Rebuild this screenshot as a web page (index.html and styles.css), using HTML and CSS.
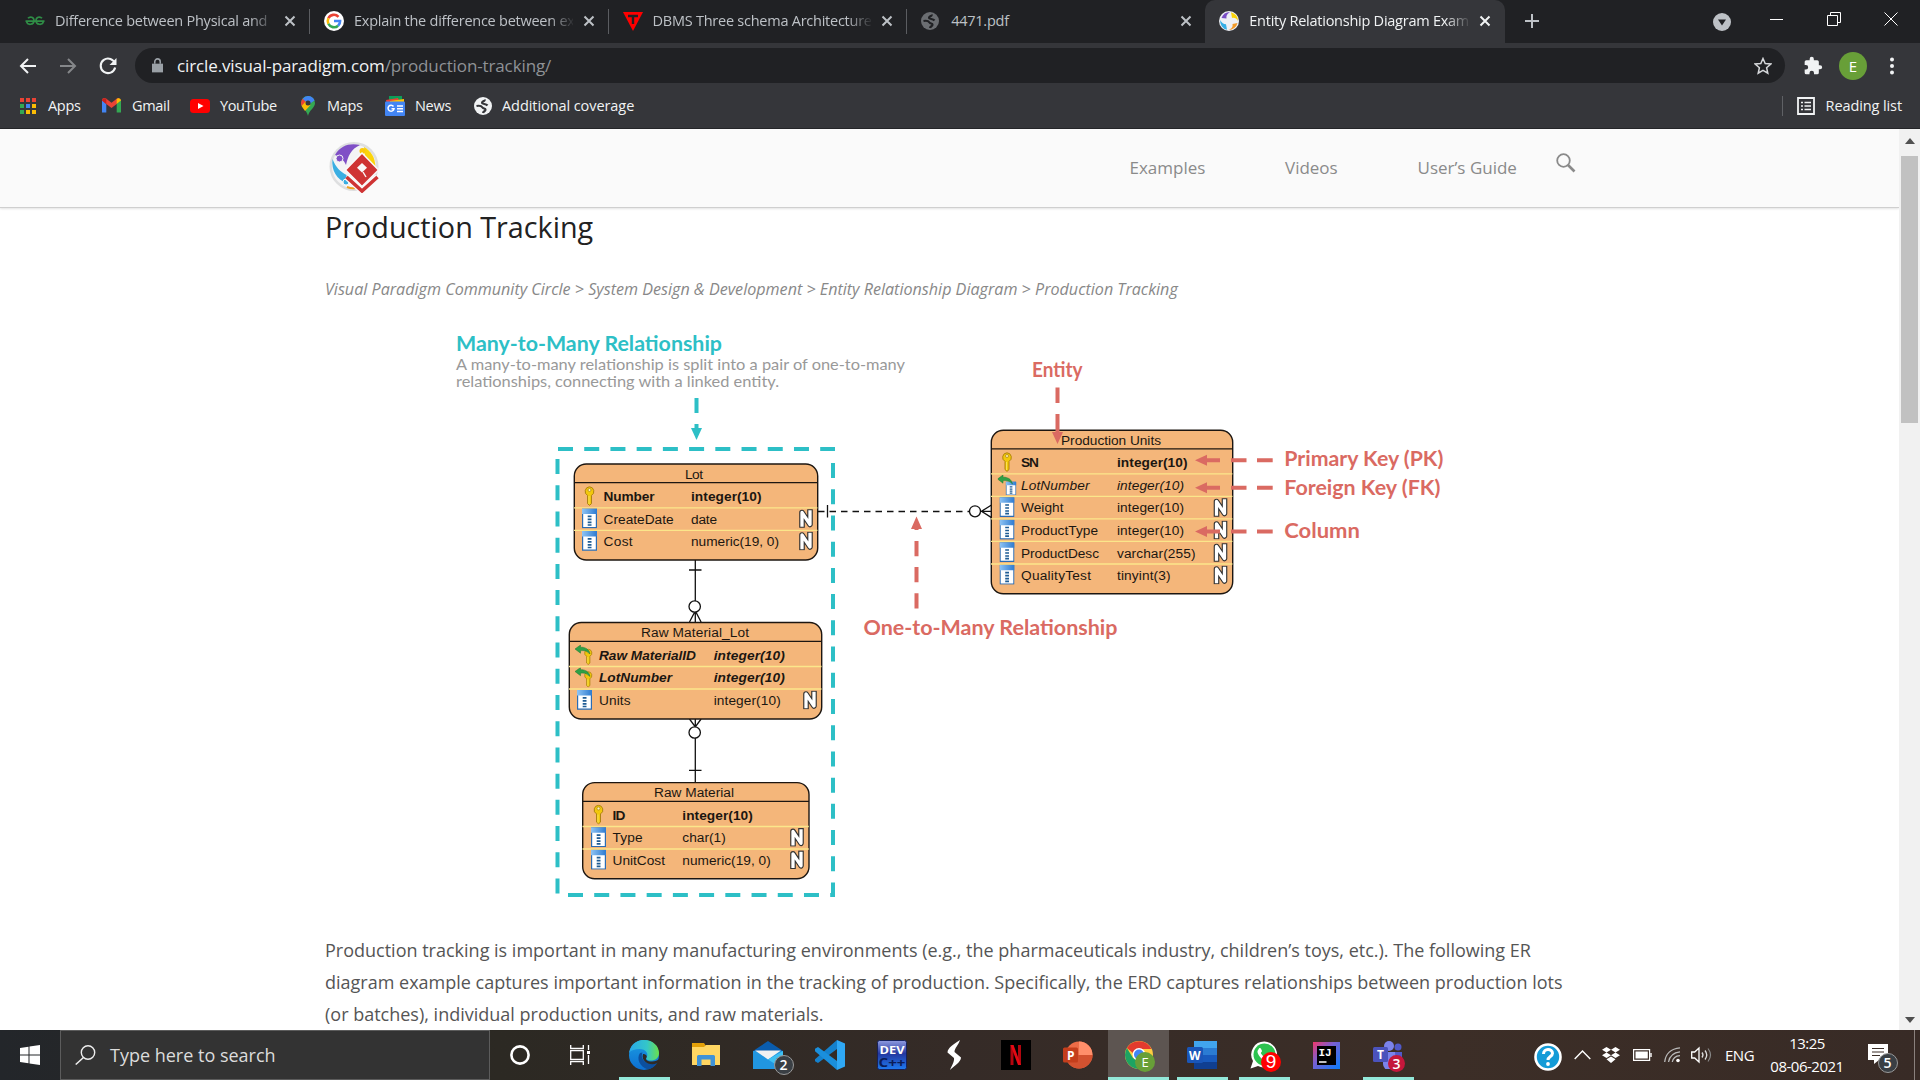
FILE: index.html
```html
<!DOCTYPE html>
<html lang="en">
<head>
<meta charset="utf-8">
<title>Entity Relationship Diagram Example</title>
<link rel="stylesheet" href="styles.css">
</head>
<body>
<svg class="defs" width="0" height="0" aria-hidden="true">
  <defs>
    <linearGradient id="colTop" x1="0" y1="0" x2="1" y2="0"><stop offset="0" stop-color="#8fc4f4"/><stop offset="1" stop-color="#2d7ad0"/></linearGradient>
    <linearGradient id="devBg" x1="0" y1="0" x2="0" y2="1"><stop offset="0" stop-color="#8f9be0"/><stop offset=".45" stop-color="#2438a0"/><stop offset="1" stop-color="#1e7af0"/></linearGradient>
    <linearGradient id="edgeA" x1="0" y1="0" x2="1" y2="0"><stop offset="0" stop-color="#28a8ea"/><stop offset=".6" stop-color="#34c6c9"/><stop offset="1" stop-color="#6be04a"/></linearGradient>
    <linearGradient id="edgeB" x1="0" y1="0" x2="0" y2="1"><stop offset="0" stop-color="#1b9de2"/><stop offset="1" stop-color="#0d6fd1"/></linearGradient>
    <linearGradient id="ijBg" x1="0" y1="0" x2="1" y2="1"><stop offset="0" stop-color="#f0386b"/><stop offset=".4" stop-color="#7a5fd0"/><stop offset="1" stop-color="#087cfa"/></linearGradient>
    <symbol id="key" viewBox="0 0 15 20"><path d="M7.5.8a4.6 4.6 0 0 0-2 8.6v8.2l2 1.8 2-1.8V9.4a4.6 4.6 0 0 0-2-8.6z" fill="#f2c80c" stroke="#a67c0c" stroke-width=".9"/><circle cx="7.5" cy="4" r="1.5" fill="#fff5c0" stroke="#a67c0c" stroke-width=".7"/><path d="M7 10v8" stroke="#fbe66a" stroke-width=".8"/></symbol>
    <symbol id="col" viewBox="0 0 15 20"><path d="M.6.6h13.800v18.600H.6z" fill="#fff" stroke="#2a6cb4" stroke-width="1.200"/><path d="M0 0h15v5.500H0z" fill="url(#colTop)"/><path d="M5.700 7.800h3.800M5.700 10.800h3.800M5.700 13.800h3.800M5.700 16.500h3.800" stroke="#1f5c94" stroke-width="1.700"/></symbol>
    <symbol id="arr" viewBox="0 0 16 10"><path d="M0 4 5.500 0v2.200C10 2 14 4 15 9c-3-3.200-6-3.800-9.500-3.200V8.200z" fill="#2fa046" stroke="#187a30" stroke-width=".5"/></symbol>
    <symbol id="fkey" viewBox="0 0 20 20"><use href="#key" x="7" y="3.500" width="12.500" height="16.500"/><use href="#arr" x="0" y="0" width="16" height="10"/></symbol>
    <symbol id="fcol" viewBox="0 0 20 20"><use href="#col" x="8" y="6.500" width="11" height="14"/><use href="#arr" x="0" y="0" width="16" height="10"/></symbol>
    <symbol id="nul" viewBox="0 0 15 19"><path d="M3.500 16V3.500L11.500 15.500V3" fill="none" stroke="#333" stroke-width="5.600" stroke-linejoin="round" stroke-linecap="square"/><path d="M3.500 16V3.500L11.500 15.500V3" fill="none" stroke="#fff" stroke-width="3.300" stroke-linejoin="round" stroke-linecap="square"/></symbol>
    <symbol id="x" viewBox="0 0 12 12"><path d="m1.500 1.500 9 9m0-9-9 9" stroke="currentColor" stroke-width="2" fill="none"/></symbol>
    <symbol id="globe" viewBox="0 0 18 18"><circle cx="9" cy="9" r="9" fill="currentColor"/><path d="M10.500 2.500c1 1.500-3 2-2.500 3.500s4 .5 5.500 2.500" fill="none" stroke="var(--hole)" stroke-width="2.200"/><path d="M2.500 9c2.500-.5 5 0 6 1.500s3 .5 3 2.200-2 1.300-2.500 3.300" fill="none" stroke="var(--hole)" stroke-width="2.200"/></symbol>
    <symbol id="swirl" viewBox="0 0 20 20"><circle cx="10" cy="10" r="10" fill="#eef0f4"/><path d="M2.500 7A9 9 0 0 1 11 1c-3 2-4 4-3.500 6.500z" fill="#7a4fc4"/><path d="M12 1.200A9 9 0 0 1 19 10c-1.500-2.600-3.500-3.600-6-3z" fill="#fbd40a"/><path d="M18.500 12a9 9 0 0 1-9 7c3.500-1.400 4.500-3.200 4-6z" fill="#f19a28"/><path d="M8 18.800A9 9 0 0 1 1.200 9C3 12 4.500 13 7 13.200z" fill="#35aee6"/></symbol>
  </defs>
</svg>

<header class="browser">
  <div class="tabs">
    <div class="tab"><svg class="fav" viewBox="0 0 20 20"><path d="M.5 10.200h19M3 7.300C5 5 9 6 9 9.500c0 4.500-6.500 5.200-7.500.9M17 7.300C15 5 11 6 11 9.500c0 4.500 6.500 5.200 7.500.9" fill="none" stroke="#2f8d46" stroke-width="1.700"/></svg><span class="name fade">Difference between Physical and</span><svg class="x"><use href="#x"/></svg></div>
    <div class="tab"><svg class="fav" viewBox="0 0 20 20"><circle cx="10" cy="10" r="10" fill="#fff"/><g fill="none" stroke-width="2.600"><path d="M14.500 5.800A6.200 6.200 0 0 0 4.400 7.300" stroke="#ea4335"/><path d="M4.400 7.300a6.200 6.200 0 0 0 0 5.400" stroke="#fbbc05"/><path d="M4.400 12.700a6.200 6.200 0 0 0 9.700 2" stroke="#34a853"/><path d="M14.100 14.700A6.200 6.200 0 0 0 16.100 10H10" stroke="#4285f4"/></g></svg><span class="name fade">Explain the difference between ex</span><svg class="x"><use href="#x"/></svg></div>
    <div class="tab"><svg class="fav" viewBox="0 0 20 20"><path d="M0 1h20L10 20z" fill="#f00"/><path d="M5 5h10M10 5v8" stroke="#202124" stroke-width="2.400"/></svg><span class="name fade">DBMS Three schema Architecture</span><svg class="x"><use href="#x"/></svg></div>
    <div class="tab"><svg class="fav dim" viewBox="0 0 20 20"><use href="#globe" width="18" height="18" y="1"/></svg><span class="name">4471.pdf</span><svg class="x"><use href="#x"/></svg></div>
    <div class="tab active"><svg class="fav" viewBox="0 0 20 20"><use href="#swirl"/></svg><span class="name fade">Entity Relationship Diagram Exam</span><svg class="x"><use href="#x"/></svg></div>
    <svg class="newtab" viewBox="0 0 16 16"><path d="M8 1v14M1 8h14" stroke="#bdc1c6" stroke-width="2"/></svg>
    <div class="wincontrols">
      <svg width="18" height="18" viewBox="0 0 18 18"><circle cx="9" cy="9" r="9" fill="#bdc1c6"/><path d="M5 6.500h8L9 12.500z" fill="#202124"/></svg>
      <svg width="14" height="14" viewBox="0 0 14 14"><path d="M0 7.500h13" stroke="#fff"/></svg>
      <svg width="14" height="14" viewBox="0 0 14 14"><path d="M.5 3.500h10v10H.5zM3.500 3V.5h10v10H11" fill="none" stroke="#fff"/></svg>
      <svg width="14" height="14" viewBox="0 0 14 14"><path d="m.5.500 13 13m0-13-13 13" stroke="#fff"/></svg>
    </div>
  </div>

  <div class="toolbar">
    <svg class="nav-ico back" viewBox="0 0 18 18"><path d="M17 9H2.500M9 2 2 9l7 7" fill="none" stroke="#f1f3f4" stroke-width="2"/></svg>
    <svg class="nav-ico fwd" viewBox="0 0 18 18"><path d="M1 9h14.500M9 2l7 7-7 7" fill="none" stroke="#85878a" stroke-width="2"/></svg>
    <svg class="nav-ico" viewBox="0 0 18 18"><path d="M15.500 5.500A7.300 7.300 0 1 0 16.300 9" fill="none" stroke="#f1f3f4" stroke-width="2.100" transform="rotate(12 9 9)"/><path d="M17.500 1v7h-7z" fill="#f1f3f4"/></svg>
    <div class="omnibox">
      <svg width="11" height="15" viewBox="0 0 12 16"><path d="M0 6h12v9.500H0z" fill="#9aa0a6"/><path d="M3 6V3.800a3 3 0 0 1 6 0V6" fill="none" stroke="#9aa0a6" stroke-width="1.700"/></svg>
      <span class="url"><b>circle.visual-paradigm.com</b>/production-tracking/</span>
      <svg class="star" viewBox="0 0 18 18"><path d="m9 1.500 2.200 5 5.600.5-4.200 3.700 1.200 5.500L9 13.300l-4.800 2.900 1.200-5.500L1.200 7l5.600-.5z" fill="none" stroke="#d5d7da" stroke-width="1.500"/></svg>
    </div>
    <svg class="puzzle" viewBox="0 0 24 24"><path d="M20.500 11H19V7a2 2 0 0 0-2-2h-4V3.500a2.500 2.500 0 0 0-5 0V5H4a2 2 0 0 0-2 2v3.800h1.500a2.700 2.700 0 0 1 0 5.400H2V20a2 2 0 0 0 2 2h3.800v-1.500a2.700 2.700 0 0 1 5.400 0V22H17a2 2 0 0 0 2-2v-4h1.500a2.500 2.500 0 0 0 0-5z" fill="#f1f3f4"/></svg>
    <span class="avatar">E</span>
    <svg class="dots" viewBox="0 0 4 18"><g fill="#f1f3f4"><circle cx="2" cy="2.500" r="2"/><circle cx="2" cy="9" r="2"/><circle cx="2" cy="15.500" r="2"/></g></svg>
  </div>

  <nav class="bookmarks">
    <span class="bm b-apps"><svg width="16" height="16" viewBox="0 0 16 16"><path d="M0 0h4v4H0zM6 0h4v4H6zM12 0h4v4h-4z" fill="#ea4335"/><path d="M0 6h4v4H0zM0 12h4v4H0z" fill="#34a853"/><path d="M6 6h4v4H6z" fill="#4285f4"/><path d="M12 6h4v4h-4zM6 12h4v4H6zM12 12h4v4h-4z" fill="#fbbc05"/></svg>Apps</span>
    <span class="bm b-gmail"><svg width="19" height="15" viewBox="0 0 19 15"><path d="M0 2v12.500h4.300V6z" fill="#4285f4"/><path d="M19 2v12.500h-4.300V6z" fill="#34a853"/><path d="M0 2.500C0 0 2.500-.5 4 .6l5.500 4.200L15 .6c1.500-1.100 2.500-.6 2.500-.6L14.700 6 9.500 10 4.300 6z" fill="#ea4335"/><path d="M14.700.8C17 -.6 19 .5 19 2.500L14.700 6z" fill="#fbbc05"/><path d="M0 2.500C0 .5 2.200-.6 4.300.8V6z" fill="#c5221f"/></svg>Gmail</span>
    <span class="bm b-yt"><svg width="20" height="14" viewBox="0 0 20 14"><rect width="20" height="14" rx="3.500" fill="#f00"/><path d="m8 4 5.500 3L8 10z" fill="#fff"/></svg>YouTube</span>
    <span class="bm b-maps"><svg width="14" height="20" viewBox="0 0 14 20"><path d="M7 0a7 7 0 0 1 7 7c0 5-6 7-7 13C6 14 0 12 0 7a7 7 0 0 1 7-7z" fill="#34a853"/><path d="M7 0a7 7 0 0 1 6.500 4.500L7 9 1.500 3A7 7 0 0 1 7 0z" fill="#4285f4"/><path d="M1.600 2.700 5 6 .6 10C-.5 7 0 4.500 1.600 2.700z" fill="#ea4335"/><path d="m.6 10 4-4.500L9.500 9 4 15z" fill="#fbbc05"/><circle cx="7" cy="7" r="2.500" fill="#35363a"/></svg>Maps</span>
    <span class="bm b-news"><svg width="20" height="20" viewBox="0 0 20 20"><path d="M4 0h13v8H4z" fill="#0c9d58"/><path d="M1 4l12-2 2 6H2z" fill="#ea4335"/><path d="M5 5l14-2v6H5z" fill="#ffc107"/><rect y="5.500" width="20" height="14.500" rx="1" fill="#4285f4"/><path d="M8.500 10.500A3 3 0 1 0 9 12.800H6.500M12 10h6M12 12.800h6M12 15.600h6" fill="none" stroke="#fff" stroke-width="1.500"/></svg>News</span>
    <span class="bm b-add"><svg class="lit" width="18" height="18"><use href="#globe"/></svg>Additional coverage</span>
    <span class="bm reading"><svg width="18" height="18" viewBox="0 0 18 18"><path d="M1 1h16v16H1z" fill="none" stroke="#f1f3f4" stroke-width="1.800"/><path d="M4 5.500h2M4 9h2M4 12.500h2M7.500 5.500H14M7.500 9H14M7.500 12.500H14" stroke="#f1f3f4" stroke-width="1.700"/></svg>Reading list</span>
  </nav>
</header>

<div class="viewport">
  <main class="page">
    <div class="site-head">
      <svg class="logo" viewBox="0 0 50 52"><circle cx="25" cy="25.500" r="24.500" fill="#dedfe0"/><circle cx="25" cy="25.500" r="22" fill="#f4f4f5"/><path d="M6 14C12 4 21 2 31 4 22 8 19 15 17 24 15 19 11 16 6 14z" fill="#7f4fc6"/><circle cx="10.500" cy="17.500" r="3.500" fill="#7f4fc6" stroke="#f4f4f5"/><path d="M35 6c7 4 11 10 11.500 20L36 16z" fill="#fbd40a"/><circle cx="33.500" cy="10" r="3" fill="#fbc80a"/><path d="M3.500 18c3 8 8 13 14 16v8C8 39 2 29 3.500 18z" fill="#3aaee2"/><circle cx="17" cy="41" r="3" fill="#3aaee2" stroke="#f4f4f5"/><path d="M18 46q5 2 8 1" stroke="#f0a020" stroke-width="2" fill="none"/><path d="m17.500 36 15.500 14 15.500-14" fill="none" stroke="#fafafa" stroke-width="6"/><path d="m17.500 36 15.500 14 15.500-14" fill="none" stroke="#cf3434" stroke-width="3.600"/><path d="M33 12 49.500 29 33 45.500 16.500 29z" fill="#cf3434" stroke="#fafafa" stroke-width="1.500"/><path d="m33 22 5 4.700-5 4.800-5-4.800z" fill="#fafafa"/><path d="m34 31 3 5" stroke="#fafafa" stroke-width="1.400"/></svg>
      <nav class="menu"><a class="m1">Examples</a><a class="m2">Videos</a><a class="m3">User’s Guide</a>
      <svg width="20" height="20" viewBox="0 0 20 20"><circle cx="7.500" cy="7.500" r="6.300" fill="none" stroke="#8a8a8a" stroke-width="1.800"/><path d="m12 12 6.500 6.500" stroke="#8a8a8a" stroke-width="2.600"/></svg></nav>
    </div>
    <article class="content">
      <h1>Production Tracking</h1>
      <p class="crumbs">Visual Paradigm Community Circle &gt; System Design &amp; Development &gt; Entity Relationship Diagram &gt; Production Tracking</p>
      <svg class="erd" viewBox="440 320 1020 590">
        <g class="geo teal" font-size="20.500">
          <text x="456" y="351" textLength="266" lengthAdjust="spacingAndGlyphs">Many-to-Many Relationship</text>
        </g>
        <g class="note">
          <text x="456" y="369.500" textLength="449" lengthAdjust="spacingAndGlyphs">A many-to-many relationship is split into a pair of one-to-many</text>
          <text x="456" y="387" textLength="323" lengthAdjust="spacingAndGlyphs">relationships, connecting with a linked entity.</text>
        </g>
        <g class="teal-line">
          <path d="M696.500 398v15M696.500 424v5"/>
          <path d="M558 449H835M833 463V897M568 895H833M557.500 459V895" stroke-dasharray="15 11.220"/>
        </g>
        <path d="m691 428 5.500 12 5.500-12z" fill="#2dbfc6"/>

        <g class="rel">
          <path d="M695.300 560v41M689 570h12.500M695.300 611v11.500M689.500 622l5.800-11 5.800 11"/>
          <circle cx="694.700" cy="606.500" r="5.700"/>
          <path d="M695.300 719v8M689.500 719l5.800 8 5.800-8M695.300 738v44M689 770.300h12.500"/>
          <circle cx="694.700" cy="732.500" r="5.700"/>
          <path d="M827.500 505v12.500M991.500 505l-10 6.300 10 6.300M980.500 511.300h11"/>
          <path d="M818 511.500h152" stroke-dasharray="6.500 5"/>
          <circle cx="975" cy="511.300" r="5.500"/>
        </g>

        <g class="entity">
          <rect x="574.300" y="464" width="243.400" height="96" rx="12"/>
          <path class="rule" d="M574.300 482.700h243.400"/>
          <path class="sep" d="M574 507.800h243.500M574 530.300h243.500"/>
          <text x="685" y="478.500" textLength="18">Lot</text>
          <use href="#key" x="582" y="486" width="15" height="20"/>
          <text class="pk" x="603.600" y="501" textLength="51">Number</text><text class="pk" x="691" y="501" textLength="70.500">integer(10)</text>
          <use href="#col" x="582" y="508.500" width="15" height="20"/>
          <text x="603.600" y="523.500" textLength="70">CreateDate</text><text x="691" y="523.500" textLength="26">date</text>
          <use href="#nul" x="798.500" y="509" width="15" height="19"/>
          <use href="#col" x="582" y="531" width="15" height="20"/>
          <text x="603.600" y="546" textLength="29">Cost</text><text x="691" y="546" textLength="88">numeric(19, 0)</text>
          <use href="#nul" x="798.500" y="531.500" width="15" height="19"/>
        </g>

        <g class="entity">
          <rect x="569.300" y="622.500" width="252.400" height="96.500" rx="12"/>
          <path class="rule" d="M569.300 641.300h252.400"/>
          <path class="sep" d="M569 666.500h252.500M569 689h252.500"/>
          <text x="641" y="637" textLength="108">Raw Material_Lot</text>
          <use href="#fkey" x="575" y="645" width="20" height="20"/>
          <text class="pk fk" x="599" y="659.700" textLength="97">Raw MaterialID</text><text class="pk fk" x="713.700" y="659.700" textLength="71">integer(10)</text>
          <use href="#fkey" x="575" y="667.500" width="20" height="20"/>
          <text class="pk fk" x="599" y="682.200" textLength="73">LotNumber</text><text class="pk fk" x="713.700" y="682.200" textLength="71">integer(10)</text>
          <use href="#col" x="577" y="690" width="15" height="20"/>
          <text x="599" y="704.800" textLength="31.500">Units</text><text x="713.700" y="704.800" textLength="67">integer(10)</text>
          <use href="#nul" x="802.500" y="690.500" width="15" height="19"/>
        </g>

        <g class="entity">
          <rect x="582.700" y="782.600" width="226.300" height="96.200" rx="12"/>
          <path class="rule" d="M582.700 801.300H809"/>
          <path class="sep" d="M582.500 826.500h226.300M582.500 849h226.300"/>
          <text x="654" y="797" textLength="80">Raw Material</text>
          <use href="#key" x="591" y="804.500" width="15" height="20"/>
          <text class="pk" x="612.500" y="819.700" textLength="13">ID</text><text class="pk" x="682.300" y="819.700" textLength="70.500">integer(10)</text>
          <use href="#col" x="591" y="827.300" width="15" height="20"/>
          <text x="612.500" y="842.300" textLength="30">Type</text><text x="682.300" y="842.300" textLength="43.500">char(1)</text>
          <use href="#nul" x="789.500" y="827.800" width="15" height="19"/>
          <use href="#col" x="591" y="849.800" width="15" height="20"/>
          <text x="612.500" y="864.800" textLength="52.500">UnitCost</text><text x="682.300" y="864.800" textLength="88.500">numeric(19, 0)</text>
          <use href="#nul" x="789.500" y="850.300" width="15" height="19"/>
        </g>

        <g class="entity">
          <rect x="991.300" y="430.200" width="241.400" height="163.600" rx="12"/>
          <path class="rule" d="M991.300 448.900h241.400"/>
          <path class="sep" d="M991 473.900h241.500M991 496.400h241.500M991 518.900h241.500M991 541.400h241.500M991 564h241.500"/>
          <text x="1061" y="444.700" textLength="100">Production Units</text>
          <use href="#key" x="999.500" y="452" width="15" height="20"/>
          <text class="pk" x="1021" y="467.300" textLength="18">SN</text><text class="pk" x="1117" y="467.300" textLength="70.500">integer(10)</text>
          <use href="#fcol" x="997.500" y="475" width="20" height="20"/>
          <text class="fk" x="1021" y="489.900" textLength="68.500">LotNumber</text><text class="fk" x="1117" y="489.900" textLength="67">integer(10)</text>
          <use href="#col" x="999.500" y="497.200" width="15" height="20"/>
          <text x="1021" y="512.400" textLength="42.500">Weight</text><text x="1117" y="512.400" textLength="67">integer(10)</text>
          <use href="#nul" x="1213" y="498" width="15" height="19"/>
          <use href="#col" x="999.500" y="519.700" width="15" height="20"/>
          <text x="1021" y="535" textLength="77">ProductType</text><text x="1117" y="535" textLength="67">integer(10)</text>
          <use href="#nul" x="1213" y="520.500" width="15" height="19"/>
          <use href="#col" x="999.500" y="542.200" width="15" height="20"/>
          <text x="1021" y="557.500" textLength="78">ProductDesc</text><text x="1117" y="557.500" textLength="78.500">varchar(255)</text>
          <use href="#nul" x="1213" y="543" width="15" height="19"/>
          <use href="#col" x="999.500" y="564.800" width="15" height="20"/>
          <text x="1021" y="580" textLength="70">QualityTest</text><text x="1117" y="580" textLength="53.500">tinyint(3)</text>
          <use href="#nul" x="1213" y="565.500" width="15" height="19"/>
        </g>

        <g class="red-line">
          <path d="M1057.500 387.500v15.500M1057.500 414v18.500M916.500 528v2M916.500 541v15.200M916.500 567v15.200M916.500 593.200v15.200"/>
          <path d="M1205 460.200h15M1231 460.200h15.500M1257 460.200h15.700M1205 487.800h15M1231 487.800h15.500M1257 487.800h15.700M1205 531.600h15M1231 531.600h15.500M1257 531.600h15.700"/>
        </g>
        <path fill="#da6a62" d="m1052 432 5.500 12 5.500-12zM911 529l5.500-12.500L922 529zM1207 454.700l-12 5.500 12 5.500zM1207 482.300l-12 5.500 12 5.500zM1207 526.100l-12 5.500 12 5.500z"/>
        <g class="geo red" font-size="20.500">
          <text x="1032" y="376.700" textLength="50.500" lengthAdjust="spacingAndGlyphs">Entity</text>
          <text x="1284.300" y="465.500" textLength="159" lengthAdjust="spacingAndGlyphs">Primary Key (PK)</text>
          <text x="1284.300" y="494.500" textLength="156" lengthAdjust="spacingAndGlyphs">Foreign Key (FK)</text>
          <text x="1284.300" y="538.300" textLength="75.500" lengthAdjust="spacingAndGlyphs">Column</text>
          <text x="863.500" y="634.500" textLength="254" lengthAdjust="spacingAndGlyphs">One-to-Many Relationship</text>
        </g>
      </svg>
      <p class="body">Production tracking is important in many manufacturing environments (e.g., the pharmaceuticals industry, children’s toys, etc.). The following ER<br>diagram example captures important information in the tracking of production. Specifically, the ERD captures relationships between production lots<br>(or batches), individual production units, and raw materials.</p>
    </article>
  </main>
  <div class="scrollbar">
    <svg width="10" height="6" viewBox="0 0 10 6"><path d="M0 6 5 0l5 6z" fill="#505050"/></svg>
    <div class="thumb"></div>
    <svg width="10" height="6" viewBox="0 0 10 6"><path d="M0 0h10L5 6z" fill="#505050"/></svg>
  </div>
</div>

<footer class="taskbar">
  <div class="start"><svg width="20" height="20" viewBox="0 0 20 20"><path d="M0 3 8.500 1.700v7.800H0zM9.500 1.500 20 0v9.500H9.500zM0 10.500h8.500v7.800L0 17zM9.500 10.500H20V20L9.500 18.500z" fill="#fff"/></svg></div>
  <div class="search"><svg width="21" height="20" viewBox="0 0 21 20"><circle cx="13" cy="7.500" r="6.700" fill="none" stroke="#eee" stroke-width="1.400"/><path d="M8.500 12.500.7 19.500" stroke="#eee" stroke-width="1.500"/></svg><span>Type here to search</span></div>
  <div class="cell"><svg width="20" height="20" viewBox="0 0 20 20"><circle cx="10" cy="10" r="8.600" fill="none" stroke="#fff" stroke-width="2.600"/></svg></div>
  <div class="cell"><svg width="20" height="20" viewBox="0 0 20 20"><path d="M.7 0v3.500h12.600V0M.7 5.700h12.600v8.600H.7zM.7 20v-3.500h12.600V20M18.500 0v5M18.500 10v9" fill="none" stroke="#fff" stroke-width="1.300"/><path d="M17 6h3v3h-3z" fill="#fff"/></svg></div>
  <div class="cell run"><svg width="30" height="30" viewBox="0 0 30 30"><circle cx="15" cy="15" r="15" fill="url(#edgeB)"/><path d="M0 13C2 2 10 0 15 0c9 0 15 6 15 13 0 5-4 7.500-8 7.500-4 0-5.500-1.500-4.500-3C20 14 17 9 10.500 9 6 9 2 10 0 13z" fill="url(#edgeA)"/><path d="M11 13c-4 6 0 14 8 16.500 4-1 7.500-3.500 9.500-6.800-4 2-9 1.800-12-.7-3.500-2.500-4.500-6-3-9.500z" fill="#0c4f9e"/><path d="M17.500 17.500c-1.500 2 .5 4 5.500 4 3.500 0 5.500-1 7-2.500l-1.500 4c-4 2-9 1.500-12-1-2.500-2-3.500-5-2.500-8 2 0 4.500 1.500 3.500 3.500z" fill="#2f2a26"/></svg></div>
  <div class="cell"><svg width="28" height="24" viewBox="0 0 28 24"><path d="M0 0h12l2 3v4H0z" fill="#e3a008"/><path d="M0 4h12l2-2h14v20H0z" fill="#ffd662"/><path d="M5 13.500q0-1.500 1.500-1.500h15q1.500 0 1.500 1.500V23h-4.500v-6.500h-9V23H5z" fill="#3f92d6"/></svg></div>
  <div class="cell"><svg width="30" height="28" viewBox="0 0 30 28"><path d="M0 10 15 0l15 10z" fill="#0a5cad"/><path d="M0 10h30v18H0z" fill="#2196e0"/><path d="M2 9.500h26L15 18.500z" fill="#f2f2f2"/><path d="M15 18.500 30 10v18z" fill="#3ec0f2"/></svg><b class="badge grey">2</b></div>
  <div class="cell"><svg width="30" height="30" viewBox="0 0 30 30"><path d="M22 0v9L3 23 0 21.300v-2z" fill="#1481cd"/><path d="M22 30v-9L3 7 0 8.700v2.500z" fill="#1a8fdc"/><path d="m22 0 8 3.500v23L22 30z" fill="#2fa8f5"/></svg></div>
  <div class="cell"><svg width="30" height="30" viewBox="0 0 30 30"><rect x=".5" y=".5" width="29" height="29" rx="2" fill="url(#devBg)" stroke="#16215a"/><text x="2.500" y="13.500" class="ico" font-size="11" fill="#fff" textLength="25" lengthAdjust="spacingAndGlyphs">DEV</text><text x="1.500" y="27" class="ico" font-size="12" fill="#0b1c58" textLength="27" lengthAdjust="spacingAndGlyphs">C++</text></svg></div>
  <div class="cell"><svg width="16" height="30" viewBox="0 0 16 30"><path d="M14 0C8 4 1.500 8 1.500 12.500L8 18c.5 4-2.500 8-4 12 4-4 11-8 11-12.500L8.500 12C8.500 8 12.500 5 14 0z" fill="#fff"/></svg></div>
  <div class="cell"><svg width="30" height="30" viewBox="0 0 30 30"><path d="M0 0h30v30H0z" fill="#000"/><path d="M11 5v20M18.500 5v20" stroke="#b1060f" stroke-width="3"/><path d="M9.500 5H12.500l7.500 20H17z" fill="#e50914"/></svg></div>
  <div class="cell"><svg width="30" height="28" viewBox="0 0 30 28"><circle cx="16" cy="14" r="13.500" fill="#ed6c47"/><path d="M16 .5A13.500 13.500 0 0 1 29.500 14H16z" fill="#ff8f6b"/><path d="M29.500 14a13.500 13.500 0 0 1-27 0z" fill="#d35230"/><rect y="6.500" width="15" height="15" rx="1.500" fill="#c43e1c"/><text x="4" y="18.500" class="ico" font-size="12" fill="#fff">P</text></svg></div>
  <div class="cell current run"><svg width="28" height="28" viewBox="0 0 28 28"><circle cx="14" cy="14" r="14" fill="#ffcd40"/><path d="M1.900 7A14 14 0 0 0 13 28l6-11-5 3-6-3z" fill="#1da462"/><path d="M1.900 7a14 14 0 0 1 24.500 1H14l-6 4z" fill="#e33b2e"/><circle cx="14" cy="13.500" r="6.500" fill="#fff"/><circle cx="14" cy="13.500" r="5" fill="#4285f4"/></svg><b class="badge green">E</b></div>
  <div class="cell run"><svg width="30" height="28" viewBox="0 0 30 28"><path d="M7 0h23v7H7z" fill="#41a5ee"/><path d="M7 7h23v7H7z" fill="#2b7cd3"/><path d="M7 14h23v7H7z" fill="#185abd"/><path d="M7 21h23v7H7z" fill="#103f91"/><rect y="6" width="16" height="16" rx="1.500" fill="#1a56b8"/><text x="2" y="18.500" class="ico" font-size="12" fill="#fff">W</text></svg></div>
  <div class="cell run"><svg width="28" height="28" viewBox="0 0 28 28"><path d="M14.500.5A13 13 0 1 1 8 25L.5 27.500 3 20A13 13 0 0 1 14.500.5z" fill="#fff"/><circle cx="14.500" cy="13.500" r="11" fill="#2cc34f"/><path d="M9 7.500c1.500-1 2 0 3 2.500 0 1.500-1.500 1-1 2.500 1.500 2.500 3 3.500 5 4.500 1.500 0 1.500-2 3-1.500l2 1.500c0 3-3 3.500-5 3C11 18.500 7 13 7.500 10z" fill="#fff"/></svg><b class="badge red">9</b></div>
  <div class="cell"><svg width="27" height="27" viewBox="0 0 27 27"><path d="M0 0h27v27H0z" fill="url(#ijBg)"/><path d="M4 4h19v19H4z" fill="#000"/><text x="5.500" y="14" class="mono" font-size="11" fill="#fff">IJ</text><path d="M6 20h7.500" stroke="#fff" stroke-width="1.500"/></svg></div>
  <div class="cell run"><svg width="30" height="28" viewBox="0 0 30 28"><circle cx="16" cy="5" r="5" fill="#7b83eb"/><circle cx="25" cy="6" r="3.500" fill="#5059c9"/><path d="M10 11h13v12a6.500 6.500 0 0 1-13 0z" fill="#7b83eb"/><path d="M22 11h7v8a5 5 0 0 1-6 5z" fill="#5059c9"/><rect y="6" width="15" height="15" rx="1.500" fill="#4b53bc"/><text x="4" y="18" class="ico" font-size="12" fill="#fff">T</text></svg><b class="badge crimson">3</b></div>
  <div class="tray">
    <svg class="help" width="28" height="28" viewBox="0 0 28 28"><circle cx="14" cy="14" r="12.500" fill="#149bd7" stroke="#fff" stroke-width="2.600"/><path d="M9.500 11c0-6 9-5.500 9-.7 0 3.200-4.500 3.200-4.500 6.700" fill="none" stroke="#fff" stroke-width="3"/><circle cx="14" cy="21" r="1.900" fill="#fff"/></svg>
    <svg class="chev" width="17" height="10" viewBox="0 0 17 10"><path d="m.7 9 7.800-8 7.800 8" fill="none" stroke="#fff" stroke-width="1.400"/></svg>
    <svg class="drop" width="18" height="16" viewBox="0 0 18 16"><path d="m4.500 0 4.500 2.700-4.500 2.700L0 2.700zM13.500 0 18 2.700l-4.500 2.700L9 2.700zM4.500 5.500 9 8.200l-4.500 2.700L0 8.200zM13.500 5.500 18 8.200l-4.500 2.700L9 8.200zM9 9.500l4.500 2.800L9 16l-4.500-3.700z" fill="#fff"/></svg>
    <svg class="batt" width="19" height="12" viewBox="0 0 19 12"><path d="M.6.6h16v10.800H.6z" fill="none" stroke="#fff" stroke-width="1.200"/><path d="M2.500 2.500h12.300v7H2.500zM17.300 4h1.400v4h-1.400z" fill="#fff"/></svg>
    <svg class="wifi" width="17" height="16" viewBox="0 0 17 16"><g fill="none" stroke="#bbb" stroke-width="1.300"><path d="M.7 15C1.500 7 7 1.500 16 .8"/><path d="M4.500 15C5.500 9 9.500 5.500 16 4.800"/><path d="M8.300 15c.6-3.500 3.500-6 7.700-6.300"/></g><circle cx="14" cy="13.500" r="1.800" fill="#fff"/></svg>
    <svg class="spk" width="21" height="18" viewBox="0 0 21 18"><path d="M.7 6h3L8 2v14l-4.300-4h-3z" fill="none" stroke="#fff" stroke-width="1.300"/><path d="M11 6.500q2 2.500 0 5M14 4.500q3.500 4.500 0 9" fill="none" stroke="#ddd" stroke-width="1.300"/><path d="M17 2.500q5 6.500 0 13" fill="none" stroke="#888" stroke-width="1.200"/></svg>
    <span class="lang">ENG</span>
    <span class="clock"><span>13:25</span><span>08-06-2021</span></span>
    <span class="notes"><svg width="20" height="21" viewBox="0 0 20 21"><path d="M0 0h20v16h-9l-5 4v-4H0z" fill="#fff"/><path d="M4 4.500h12M4 8h12M4 11.500h8" stroke="#3a2d27" stroke-width="1.200"/></svg><b class="badge grey">5</b></span>
  </div>
</footer>
</body>
</html>
```
FILE: styles.css
```css
* { box-sizing: border-box; }
body { margin: 0; width: 1920px; height: 1080px; overflow: hidden; display: flex; flex-direction: column; font-family: "Open Sans", "Noto Sans", sans-serif; background: #fff; }
svg { display: block; flex: none; }
.defs { position: absolute; }

.browser { flex: none; height: 129px; background: #35363a; border-bottom: 1px solid #242528; color: #f1f3f4; font-size: 14.5px; }
.tabs { display: flex; align-items: center; height: 43px; background: #202124; }
.tab { width: 298.6px; height: 43px; display: flex; align-items: center; padding: 0 14px 2px 14px; gap: 10px; color: #bdc1c6; position: relative; flex: none; }
.tab:first-child { width: 310px; padding-left: 25px; }
.tab:not(.active)::after { content: ""; position: absolute; right: 0; top: 9px; width: 1px; height: 25px; background: #5b5d61; }
.tab:nth-child(4)::after { display: none; }
.tab.active { width: 300px; background: #35363a; border-radius: 10px 10px 0 0; color: #f1f3f4; margin-left: -.5px; }
.tab .fav { width: 20px; height: 20px; }
.tab .x { width: 12px; height: 12px; }
.name { flex: 1; white-space: nowrap; overflow: hidden; letter-spacing: -.25px; line-height: 22px; }
.fade { -webkit-mask-image: linear-gradient(90deg, #000 89%, transparent 101%); mask-image: linear-gradient(90deg, #000 89%, transparent 101%); }
.dim { color: #6b6e72; --hole: #202124; }
.lit { color: #f1f3f4; --hole: #35363a; }
.newtab { width: 16px; height: 16px; margin: 0 0 1px 19px; }
.wincontrols { display: flex; align-items: center; gap: 43px; margin: 0 22px 5px auto; }
.wincontrols svg:first-child { margin: 5px -4px 0 0; }

.toolbar { display: flex; align-items: center; height: 45px; padding: 0 26px 0 19px; }
.nav-ico { width: 18px; height: 18px; margin-right: 18px; }
.nav-ico.back, .nav-ico.fwd { margin-right: 22px; }
.omnibox { width: 1650px; height: 35px; border-radius: 18px; background: #202124; display: flex; align-items: center; padding: 0 13px 0 17px; }
.url { margin-left: 14px; font-size: 17px; color: #8f9296; letter-spacing: -.12px; }
.url b { font-weight: 400; color: #f1f3f4; }
.star { width: 18px; height: 18px; margin-left: auto; }
.puzzle { width: 20px; height: 20px; margin-left: 18px; }
.avatar { width: 28px; height: 28px; border-radius: 50%; background: #689f38; color: #fff; text-align: center; font-size: 15px; line-height: 28px; margin-left: 16px; }
.dots { width: 4px; height: 18px; margin-left: auto; }
.bookmarks { display: flex; align-items: center; height: 35px; padding: 0 18px 0 20px; }
.bm { display: flex; align-items: center; gap: 11px; white-space: nowrap; letter-spacing: -.3px; height: 20px; }
.b-apps { width: 82px; gap: 12px; }
.b-gmail { width: 88px; }
.b-yt { width: 111px; gap: 10px; }
.b-yt { letter-spacing: -.4px; }
.b-maps { width: 84px; gap: 12px; }
.b-news { width: 89px; gap: 10px; }
.b-add { letter-spacing: -.07px; gap: 10px; }
.reading { margin-left: auto; padding-left: 14px; border-left: 1px solid #5f6165; letter-spacing: -.1px; }

.viewport { flex: 1; min-height: 0; display: flex; }
.page { flex: 1; overflow: hidden; }
.site-head { height: 79px; background: #fafafa; border-bottom: 1px solid #cfcfcf; box-shadow: 0 1px 2px #e4e4e4; display: flex; align-items: flex-start; padding: 12px 0 0 329px; }
.logo { width: 50px; height: 52px; }
.menu { display: flex; align-items: flex-start; padding: 13px 323px 0 0; margin-left: auto; color: #8a8a8a; font-size: 17px; line-height: 28px; }
.menu svg { margin-top: -1px; }
.m1 { width: 155.5px; }
.m2 { width: 132.5px; }
.m3 { width: 138.500px; }
.content { padding-left: 325px; color: #555; }
h1 { margin: -1px 0 0; font-size: 28.75px; font-weight: 400; color: #222; line-height: 40px; white-space: nowrap; }
.crumbs { margin: 31px 0 0; font-size: 16.13px; font-style: italic; color: #888; line-height: 22px; white-space: nowrap; }
.erd { display: block; width: 1020px; height: 590px; margin: 20px 0 0 115px; }
.body { margin: 24px 0 0; font-size: 18px; line-height: 32px; white-space: nowrap; }

.geo { font-family: Lato, "Open Sans", sans-serif; font-weight: 700; }
.teal { fill: #2dbfc6; }
.red { fill: #da6a62; }
.note { font-family: Lato, "Open Sans", sans-serif; font-size: 15px; fill: #999; }
.teal-line { fill: none; stroke: #2dbfc6; stroke-width: 4; }
.red-line { fill: none; stroke: #da6a62; stroke-width: 4; }
.rel { fill: none; stroke: #111; stroke-width: 1.3; }
.rel circle { fill: #fff; }
.entity { font-family: "Liberation Sans", Arial, sans-serif; font-size: 13.7px; fill: #1c1611; }
.entity rect { fill: #f4b67a; stroke: #1c1611; stroke-width: 1.4; }
.rule { stroke: #1c1611; stroke-width: 1.3; }
.sep { stroke: #fbe68a; stroke-width: 1.3; }
.pk { font-weight: 700; }
.fk { font-style: italic; }

.scrollbar { width: 21px; background: #f1f1f1; display: flex; flex-direction: column; align-items: center; padding: 9px 0 7px; }
.thumb { width: 17px; height: 267px; margin: 12px 0 auto; background: #c1c1c1; }

.taskbar { flex: none; height: 50px; display: flex; background: linear-gradient(90deg, #23262a 0, #2c2923 26%, #352b27 50%, #3c2e27 75%, #382b26 100%); color: #fff; }
.start { width: 60px; display: flex; align-items: center; justify-content: center; }
.search { width: 430px; background: #333; border: 1px solid #5c5c5c; display: flex; align-items: center; padding-left: 14px; gap: 14px; font-size: 18px; color: #dcdcdc; }
.cell { width: 62px; display: flex; align-items: center; justify-content: center; position: relative; flex: none; }
.search + .cell { width: 60px; }
.search + .cell + .cell { width: 63px; padding-right: 4px; }
.run::after { content: ""; position: absolute; left: 6px; right: 5px; bottom: 0; height: 3px; background: #93e8d9; }
.current { background: #5d5551; width: 61px; margin: 0 2px 0 -1px; }
.current::after { left: 0; right: 0; }
.ico { font-family: "Open Sans", sans-serif; font-weight: 700; }
.mono { font-family: "Liberation Mono", monospace; font-weight: 700; }
.badge { position: absolute; width: 20px; height: 20px; border-radius: 50%; text-align: center; font-size: 14px; line-height: 20px; font-weight: 600; left: 36px; top: 24px; }
.badge.grey { background: #3a3f44; border: 1px solid #999; line-height: 18px; left: 36.5px; top: 24.5px; }
.badge.green { background: #689f38; font-weight: 400; left: 27px; top: 22px; font-size: 13px; }
.badge.red { background: #f00; left: 28px; top: 22px; font: 19px/20px "Liberation Sans", sans-serif; }
.badge.crimson { background: #c4173c; width: 17px; height: 17px; line-height: 17px; left: 31px; top: 25px; }
.tray { flex: 1; display: flex; align-items: center; border-right: 1px solid #8a817d; margin-right: 5px; font-size: 15px; }
.help { margin: 3px 0 0 115px; }
.chev { margin-left: 12px; }
.drop { margin-left: 11px; }
.batt { margin-left: 13px; }
.wifi { margin-left: 12px; }
.spk { margin-left: 10px; }
.lang { width: 44px; margin-left: 13px; letter-spacing: -.5px; }
.clock { width: 76px; display: flex; flex-direction: column; align-items: center; line-height: 23px; letter-spacing: -.5px; }
.notes { position: relative; margin: -2px 0 0 23px; }
.notes .badge { left: 9.5px; top: 9px; }
```
